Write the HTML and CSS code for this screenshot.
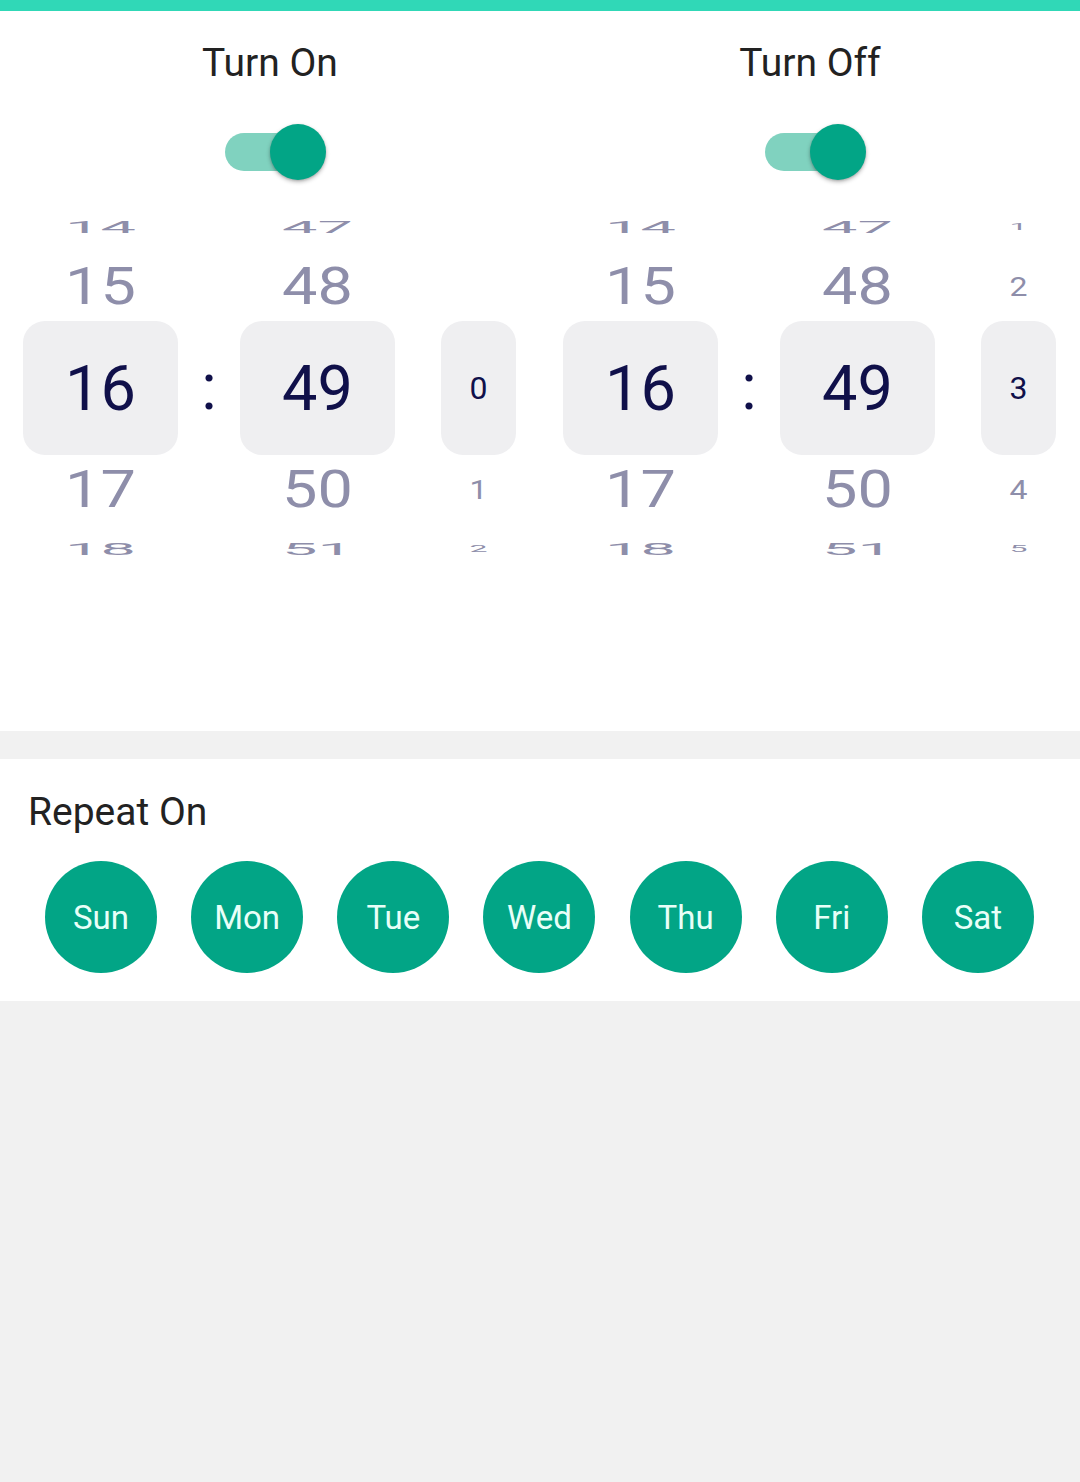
FILE: index.html
```html
<!DOCTYPE html>
<html lang="en">
<head>
    <meta charset="UTF-8">
    <meta name="viewport" content="width=device-width, initial-scale=1.0">
    <title>Schedule</title>
    <link rel="stylesheet" href="styles.css">
</head>
<body>
    <div class="top-bar"></div>

    <!-- on / off times -->
    <section class="schedule">
        <div class="half">
            <h2 class="half-title">Turn On</h2>
            <div class="toggle-row">
                <span class="toggle"><span class="thumb"></span></span>
            </div>
            <div class="picker">
                <div class="wheel big">
                    <div class="item far"><span>14</span></div>
                    <div class="item near"><span>15</span></div>
                    <div class="item current"><span>16</span></div>
                    <div class="item near"><span>17</span></div>
                    <div class="item far"><span>18</span></div>
                </div>
                <div class="colon">:</div>
                <div class="wheel big">
                    <div class="item far"><span>47</span></div>
                    <div class="item near"><span>48</span></div>
                    <div class="item current"><span>49</span></div>
                    <div class="item near"><span>50</span></div>
                    <div class="item far"><span>51</span></div>
                </div>
                <div class="wheel small">
                    <div class="item far"></div>
                    <div class="item near"></div>
                    <div class="item current"><span>0</span></div>
                    <div class="item near"><span>1</span></div>
                    <div class="item far"><span>2</span></div>
                </div>
            </div>
        </div>

        <div class="half">
            <h2 class="half-title">Turn Off</h2>
            <div class="toggle-row">
                <span class="toggle"><span class="thumb"></span></span>
            </div>
            <div class="picker">
                <div class="wheel big">
                    <div class="item far"><span>14</span></div>
                    <div class="item near"><span>15</span></div>
                    <div class="item current"><span>16</span></div>
                    <div class="item near"><span>17</span></div>
                    <div class="item far"><span>18</span></div>
                </div>
                <div class="colon">:</div>
                <div class="wheel big">
                    <div class="item far"><span>47</span></div>
                    <div class="item near"><span>48</span></div>
                    <div class="item current"><span>49</span></div>
                    <div class="item near"><span>50</span></div>
                    <div class="item far"><span>51</span></div>
                </div>
                <div class="wheel small">
                    <div class="item far"><span>1</span></div>
                    <div class="item near"><span>2</span></div>
                    <div class="item current"><span>3</span></div>
                    <div class="item near"><span>4</span></div>
                    <div class="item far"><span>5</span></div>
                </div>
            </div>
        </div>
    </section>

    <!-- repeat days -->
    <section class="repeat">
        <h2 class="repeat-title">Repeat On</h2>
        <div class="days">
            <span class="day">Sun</span>
            <span class="day">Mon</span>
            <span class="day">Tue</span>
            <span class="day">Wed</span>
            <span class="day">Thu</span>
            <span class="day">Fri</span>
            <span class="day">Sat</span>
        </div>
    </section>
</body>
</html>
```

FILE: styles.css
```css
body {
    margin: 0;
    padding: 0;
    background-color: #f1f1f1;
    font-family: Roboto, "Noto Sans", Arial, sans-serif;
}
.top-bar {
    height: 11px;
    background-color: #30d8b7;
}
.schedule {
    display: grid;
    grid-template-columns: 1fr 1fr;
    background-color: #fff;
    padding: 30px 0 157px;
}
.half-title {
    margin: 0;
    font-size: 39px;
    line-height: 44px;
    font-weight: 400;
    color: #222;
    text-align: center;
}
.toggle-row {
    display: flex;
    justify-content: center;
    align-items: center;
    height: 56px;
    margin-top: 39px;
}
.toggle {
    position: relative;
    display: block;
    width: 91px;
    height: 38px;
    border-radius: 19px;
    background-color: #80d2bf;
}
.toggle .thumb {
    position: absolute;
    top: -9px;
    right: -10px;
    width: 56px;
    height: 56px;
    border-radius: 50%;
    background-color: #02a586;
    box-shadow: 0 2px 4px rgba(0, 0, 0, 0.28), 0 1px 2px rgba(0, 0, 0, 0.12);
}
.picker {
    display: flex;
    align-items: flex-start;
    padding: 0 23px;
    margin-top: 22px;
}
.wheel {
    display: flex;
    flex-direction: column;
}
.wheel.big {
    width: 155px;
    font-size: 63px;
}
.wheel.small {
    width: 75px;
    font-size: 32px;
    margin-left: 46px;
}
.item {
    display: flex;
    justify-content: center;
    align-items: center;
    color: #8e8eaa;
    line-height: 1;
}
.item span {
    display: inline-block;
}
.item.far {
    height: 50px;
}
.item.far span {
    transform: scaleY(0.26);
}
.item.near {
    height: 69px;
}
.item.near span {
    transform: scaleY(0.82);
}
.item.current {
    height: 134px;
    border-radius: 22px;
    background-color: #efeff1;
    color: #10104a;
}
.colon {
    width: 62px;
    height: 134px;
    margin-top: 119px;
    display: flex;
    justify-content: center;
    align-items: center;
    font-size: 64px;
    line-height: 1;
    color: #10104a;
}
.repeat {
    margin-top: 28px;
    background-color: #fff;
    padding: 31px 0 28px;
}
.repeat-title {
    margin: 0 0 27px 28px;
    font-size: 39px;
    line-height: 44px;
    font-weight: 400;
    color: #222;
}
.days {
    display: flex;
    justify-content: space-between;
    padding: 0 46px 0 45px;
}
.day {
    display: flex;
    justify-content: center;
    align-items: center;
    width: 112px;
    height: 112px;
    border-radius: 50%;
    background-color: #02a586;
    color: #e8fff8;
    font-size: 33px;
}
```
